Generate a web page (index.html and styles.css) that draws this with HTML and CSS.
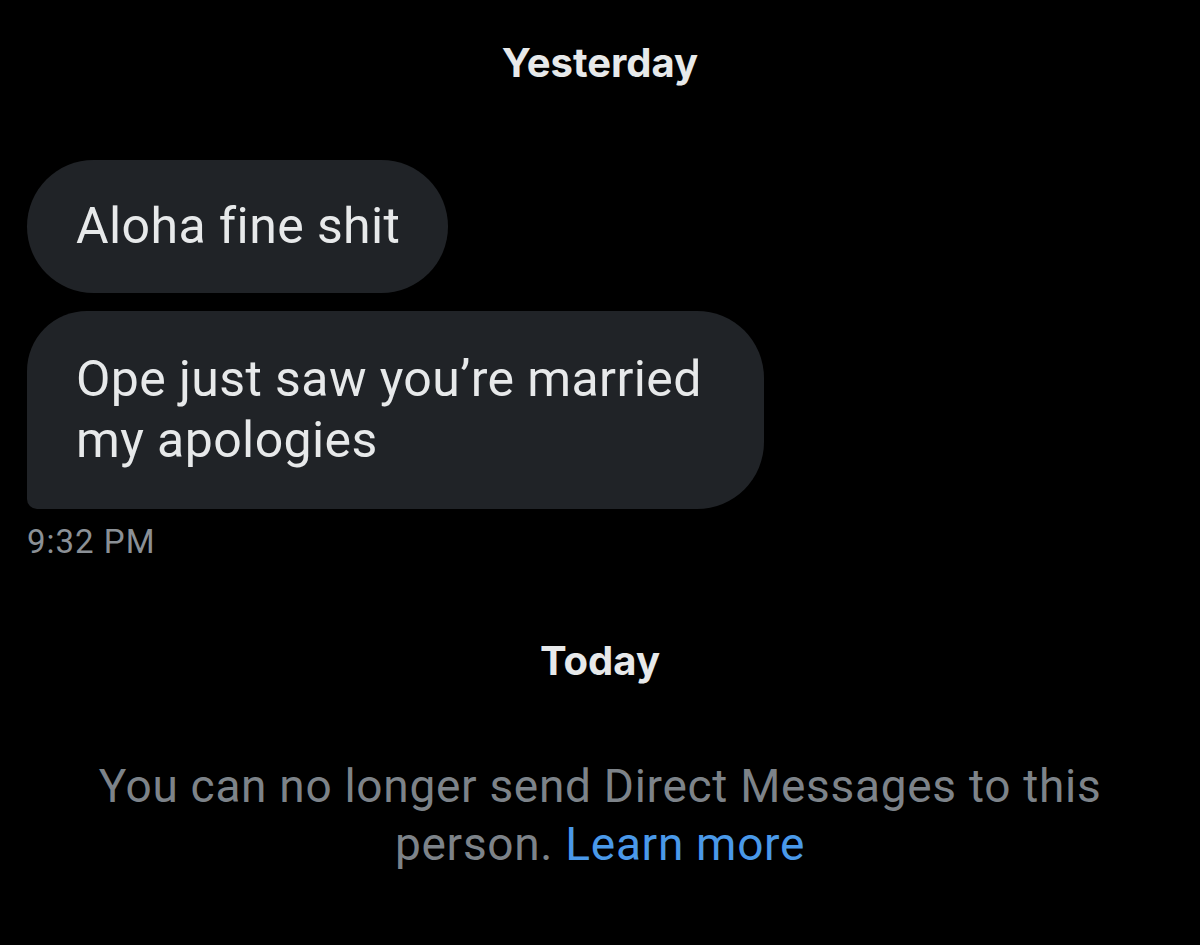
FILE: index.html
```html
<!DOCTYPE html>
<html>
<head>
<meta charset="utf-8">
<link rel="stylesheet" href="styles.css">
</head>
<body>
<main class="thread">
  <div class="day">Yesterday</div>
  <div class="msgs">
    <div class="bubble first">Aloha fine shit</div>
    <div class="bubble last">Ope just saw you’re married my apologies</div>
    <div class="time">9:32 PM</div>
  </div>
  <div class="day today">Today</div>
  <p class="notice">You can no longer send Direct Messages to this person. <a class="link" href="#">Learn more</a></p>
</main>
</body>
</html>
```
FILE: styles.css
```css
html, body {
  margin: 0;
  background: #000;
}
.thread {
  width: 1200px;
  height: 945px;
  font-family: Roboto, "Liberation Sans", sans-serif;
  color: #e7e9ea;
  display: flex;
  flex-direction: column;
  padding-top: 39px;
  box-sizing: border-box;
}
.day {
  text-align: center;
  font-family: Inter, Roboto, sans-serif;
  font-weight: 700;
  font-size: 40px;
  line-height: 48px;
  color: #e7e9ea;
}
.msgs {
  display: flex;
  flex-direction: column;
  align-items: flex-start;
  gap: 18px;
  padding-left: 27px;
  margin-top: 73px;
}
.bubble {
  background: #202327;
  font-size: 50px;
  line-height: 61px;
  letter-spacing: 0.4px;
  box-sizing: border-box;
  max-width: 737px;
  padding: 36px 49px;
  border-radius: 67px;
}
.bubble.first {
  padding: 36px 48px 36px 49px;
  border-radius: 67px;
}
.bubble.last {
  padding: 38px 49px;
  border-radius: 60px 67px 67px 10px;
}
.time {
  margin-top: -3px;
  font-size: 33px;
  line-height: 36px;
  letter-spacing: 1px;
  color: #8b9096;
}
.today {
  margin-top: 77px;
}
.notice {
  margin: 72px 0 0;
  text-align: center;
  font-size: 46px;
  line-height: 58px;
  letter-spacing: 0.7px;
  color: #7d8389;
  padding: 0 70px;
}
.link {
  color: #4a99e9;
  text-decoration: none;
}
```
